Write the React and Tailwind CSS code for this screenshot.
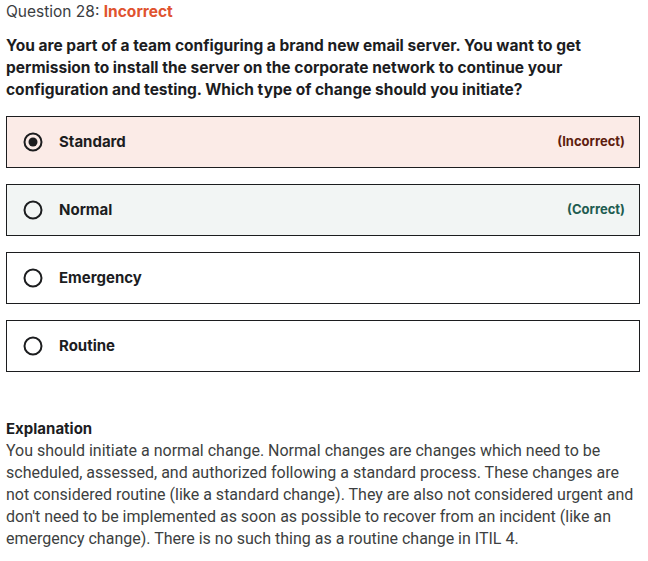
import React from "react";

function Radio({ checked }) {
  return (
    <svg width="20" height="20" viewBox="0 0 20 20" className="shrink-0">
      <circle cx="10" cy="10" r="8.5" fill="none" stroke="#1c1d1f" strokeWidth="2" />
      {checked && <circle cx="10" cy="10" r="4.5" fill="#1c1d1f" />}
    </svg>
  );
}

function Option({ label, checked, bg, tag, tagColor }) {
  return (
    <div className={`flex items-center h-[52px] border border-[#1c1d1f] pl-[16px] pr-[14px] ${bg}`}>
      <Radio checked={checked} />
      <span className="ml-[16px] text-[15px] font-bold text-[#1c1d1f]">{label}</span>
      {tag && (
        <span className={`ml-auto text-[13px] font-bold ${tagColor}`}>{tag}</span>
      )}
    </div>
  );
}

export default function App() {
  return (
    <div className="w-[648px] h-[561px] bg-white pl-[6px] pr-[2px] pt-0 font-['Inter',sans-serif] text-[#1c1d1f]">
      <div className="text-[15.5px] leading-[24px] text-[#3b3d3f]">
        Question 28: <span className="font-bold text-[#e0532f]">Incorrect</span>
      </div>
      <p className="mt-[11px] text-[15.5px] leading-[22px] font-bold pr-[34px]">
        You are part of a team configuring a brand new email server. You want to get permission to install the server on the corporate network to continue your configuration and testing. Which type of change should you initiate?
      </p>
      <div className="mt-[15px] mr-[6px] flex flex-col gap-[16px]">
        <Option label="Standard" checked bg="bg-[#fbebe7]" tag="(Incorrect)" tagColor="text-[#5e1d0f]" />
        <Option label="Normal" bg="bg-[#f2f5f4]" tag="(Correct)" tagColor="text-[#1e5c50]" />
        <Option label="Emergency" bg="bg-white" />
        <Option label="Routine" bg="bg-white" />
      </div>
      <div className="mt-[46px] text-[15px] font-bold leading-[22px]">Explanation</div>
      <p className="text-[16px] leading-[22px] text-[#3d3f41] font-['Roboto',sans-serif]">
        You should initiate a normal change. Normal changes are changes which need to be scheduled, assessed, and authorized following a standard process. These changes are not considered routine (like a standard change). They are also not considered urgent and don't need to be implemented as soon as possible to recover from an incident (like an emergency change). There is no such thing as a routine change in ITIL 4.
      </p>
    </div>
  );
}
